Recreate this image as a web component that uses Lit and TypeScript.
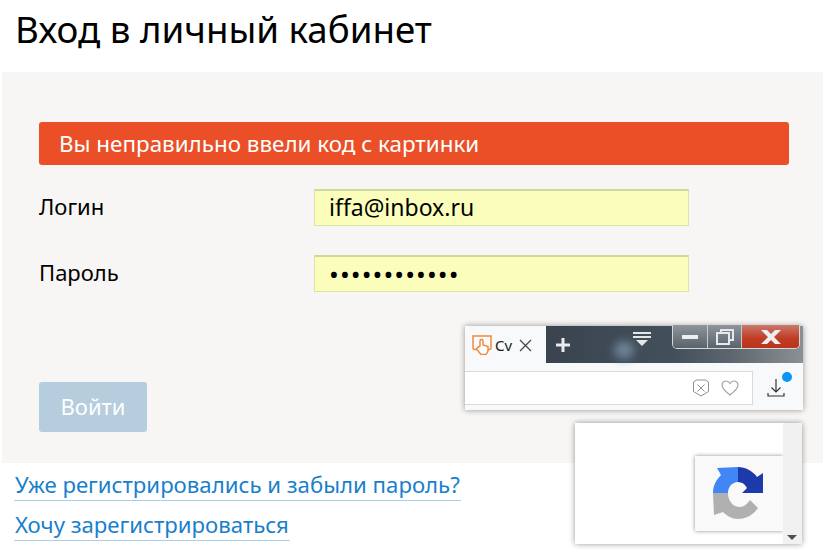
import {LitElement, html, css} from 'lit';
import {customElement} from 'lit/decorators.js';

@customElement('app-root')
export class AppRoot extends LitElement {
  static styles = css`
    :host {
      display: block;
      position: relative;
      width: 823px;
      height: 551px;
      overflow: hidden;
      background: #fff;
      font-family: 'Noto Sans', 'Open Sans', sans-serif;
      color: #000;
    }

    h1 {
      margin: 0;
      padding: 7px 0 0 15px;
      height: 72px;
      box-sizing: border-box;
      font-size: 36.7px;
      line-height: 44px;
      font-weight: 400;
    }

    .panel {
      margin-left: 2px;
      height: 391px;
      box-sizing: border-box;
      padding: 50px 34px 0 37px;
      background: #f7f6f4;
    }

    .alert {
      height: 43px;
      padding-left: 20px;
      border-radius: 3px;
      background: #eb4f28;
      color: #fff;
      font-size: 22.4px;
      line-height: 43px;
    }

    .row {
      display: grid;
      grid-template-columns: 275px 375px;
      align-items: center;
      font-size: 22px;
    }

    .row.first {
      margin-top: 24px;
    }

    .row.second {
      margin-top: 29px;
    }

    .row .label {
      padding-bottom: 3px;
    }

    .field {
      height: 37px;
      box-sizing: border-box;
      padding-left: 14px;
      border: 1px solid #dfe3a6;
      border-top: 2px solid #d3d79b;
      background: #fbfdbb;
      font-size: 23px;
      line-height: 33px;
    }

    .dots {
      font-size: 26px;
      line-height: 35px;
      letter-spacing: 1.1px;
    }

    .submit {
      display: block;
      width: 108px;
      height: 50px;
      margin-top: 90px;
      padding: 0 0 3px;
      border: none;
      border-radius: 3px;
      background: #b5cddd;
      color: #fff;
      font: inherit;
      font-size: 22px;
    }

    .links {
      display: flex;
      flex-direction: column;
      align-items: flex-start;
      gap: 8px;
      padding: 6px 0 0 14px;
    }

    .links a {
      display: block;
      height: 32px;
      padding: 0 1px;
      box-sizing: border-box;
      border-bottom: 1px solid #a9cfe9;
      color: #1a7fcb;
      font-size: 22.2px;
      line-height: 32px;
      text-decoration: none;
    }

    .browser {
      position: absolute;
      left: 465px;
      top: 326px;
      width: 338px;
      height: 84px;
      background: #f7f9fb;
      box-shadow: 0 0 6px rgba(0, 0, 0, 0.4);
    }

    .tabs {
      display: flex;
      height: 45px;
    }

    .tab {
      display: flex;
      align-items: center;
      width: 81px;
      height: 38px;
      padding-left: 7px;
      box-sizing: border-box;
      font-size: 15px;
    }

    .tab-title {
      width: 16px;
      margin-left: 3px;
      white-space: nowrap;
      color: #222;
    }

    .tab svg.close {
      margin-left: 7px;
    }

    .titlebar {
      position: relative;
      flex: 1;
      height: 37px;
      background: linear-gradient(90deg, #39444f 0%, #434f5b 50%, #5d666e 72%, #8b9095 100%);
    }

    .glow {
      position: absolute;
      left: 68px;
      top: 15px;
      width: 20px;
      height: 18px;
      border-radius: 50%;
      background: #6f8599;
      filter: blur(5px);
    }

    .plus {
      position: absolute;
      left: 10px;
      top: 12px;
    }

    .menu {
      position: absolute;
      left: 87px;
      top: 6px;
    }

    .winbtns {
      position: absolute;
      right: 3px;
      top: -1px;
      display: flex;
      width: 128px;
      height: 24px;
      box-sizing: border-box;
      border: 1px solid #d5d8da;
      border-top: none;
      border-radius: 0 0 5px 5px;
      overflow: hidden;
    }

    .winbtn {
      display: flex;
      align-items: center;
      justify-content: center;
      height: 100%;
      border-right: 1px solid #c5c9cc;
      background: linear-gradient(180deg, #8e959b 0%, #59636c 100%);
    }

    .winbtn.min {
      width: 34px;
    }

    .winbtn.max {
      width: 33px;
    }

    .winbtn.shut {
      flex: 1;
      border-right: none;
      background: linear-gradient(180deg, #c8796c 0%, #c23a22 60%, #b9351f 100%);
    }

    .toolbar {
      display: flex;
      align-items: flex-start;
      height: 39px;
    }

    .address {
      display: flex;
      align-items: center;
      justify-content: flex-end;
      gap: 12px;
      width: 288px;
      height: 34px;
      padding-right: 13px;
      box-sizing: border-box;
      border: 1px solid #d9d9d9;
      border-left: none;
      background: #fff;
    }

    .download {
      position: relative;
      margin: 7px 0 0 14px;
      height: 24px;
    }

    .badge {
      position: absolute;
      left: 15px;
      top: -6px;
      width: 10px;
      height: 10px;
      border-radius: 50%;
      background: #0a96f6;
    }

    .captcha {
      position: absolute;
      left: 575px;
      top: 423px;
      width: 227px;
      height: 121px;
      display: flex;
      background: #fff;
      box-shadow: 0 0 6px rgba(0, 0, 0, 0.4);
    }

    .captcha-body {
      position: relative;
      flex: 1;
    }

    .scroll {
      position: relative;
      width: 19px;
      background: #f1f1f1;
    }

    .arrow {
      position: absolute;
      left: 4px;
      bottom: 4px;
      width: 0;
      height: 0;
      border-left: 5px solid transparent;
      border-right: 5px solid transparent;
      border-top: 5px solid #505050;
    }

    .logo-box {
      position: absolute;
      left: 120px;
      top: 33px;
      width: 88px;
      height: 75px;
      background: #f9f9f9;
      box-shadow: 0 0 4px rgba(0, 0, 0, 0.45);
      clip-path: inset(-6px 0 -6px -6px);
    }

    .logo-box svg {
      display: block;
    }
  `;

  render() {
    return html`
      <h1>Вход в личный кабинет</h1>
      <div class="panel">
        <div class="alert">Вы неправильно ввели код с картинки</div>
        <div class="row first">
          <span class="label">Логин</span>
          <div class="field">iffa@inbox.ru</div>
        </div>
        <div class="row second">
          <span class="label">Пароль</span>
          <div class="field dots">••••••••••••</div>
        </div>
        <button class="submit">Войти</button>
      </div>
      <div class="links">
        <a href="#">Уже регистрировались и забыли пароль?</a>
        <a href="#">Хочу зарегистрироваться</a>
      </div>

      <div class="browser">
        <div class="tabs">
          <div class="tab">
            <svg width="20" height="20" viewBox="0 0 20 20" fill="none" stroke="#f08a3c" stroke-width="1.5">
              <path d="M5 14.500H3a2 2 0 0 1-2-2V1h18v11.500a2 2 0 0 1-2 2h-1" />
              <path d="M8 11V6a1.500 1.500 0 0 1 3 0v4l5 1.500V16l-2 3.500H9L4.500 14l1-1.500z" fill="#fff" />
            </svg>
            <span class="tab-title">Сv</span>
            <svg class="close" width="15" height="15" viewBox="0 0 15 15" stroke="#444" stroke-width="1.2">
              <path d="M2 2l11 11M13 2L2 13" />
            </svg>
          </div>
          <div class="titlebar">
            <div class="glow"></div>
            <svg class="plus" width="14" height="14" viewBox="0 0 14 14" fill="#e8eaec">
              <path d="M5.500 0h3v5.500H14v3H8.500V14h-3V8.500H0v-3h5.500z" />
            </svg>
            <svg class="menu" width="18" height="15" viewBox="0 0 18 15" fill="#e4e6e8">
              <path d="M0 0h18v2H0zM0 4h18v2H0zM3 8h12l-6 6z" />
            </svg>
            <div class="winbtns">
              <div class="winbtn min">
                <svg width="16" height="5" viewBox="0 0 16 5" fill="#eceeef"><rect width="16" height="4" y="1" /></svg>
              </div>
              <div class="winbtn max">
                <svg width="18" height="16" viewBox="0 0 18 16" fill="none" stroke="#e6e8ea" stroke-width="2">
                  <path d="M5 4V1h12v10h-3" />
                  <rect x="1" y="4" width="12" height="11" />
                </svg>
              </div>
              <div class="winbtn shut">
                <svg width="22" height="14" viewBox="0 0 22 14" fill="#eef0f0">
                  <path d="M1 0h6l4 4 4-4h6l-7 7 7 7h-6l-4-4-4 4H1l7-7z" />
                </svg>
              </div>
            </div>
          </div>
        </div>
        <div class="toolbar">
          <div class="address">
            <svg width="16" height="18" viewBox="0 0 16 18" fill="none" stroke="#8a8f94" stroke-width="1">
              <path d="M3.500 1h9l3 2v9.500L8 17l-7.500-4.500V3z" />
              <path d="M4.500 5.500l7 7M11.500 5.500l-7 7" />
            </svg>
            <svg width="18" height="16" viewBox="0 0 18 16" fill="none" stroke="#9a9ea2" stroke-width="1.1">
              <path d="M9 15C4 11 1 8.500 1 5.200 1 2.800 3 1 5 1c1.700 0 3 .9 4 2.500C10 1.900 11.300 1 13 1c2 0 4 1.800 4 4.200C17 8.500 14 11 9 15z" />
            </svg>
          </div>
          <div class="download">
            <svg width="18" height="24" viewBox="0 0 18 24" fill="none" stroke="#333" stroke-width="1.2">
              <path d="M9 1v13M4.500 9.500L9 14l4.500-4.500M1 15v3h16v-3" />
            </svg>
            <div class="badge"></div>
          </div>
        </div>
      </div>

      <div class="captcha">
        <div class="captcha-body">
          <div class="logo-box">
            <svg width="88" height="75" viewBox="0 0 88 75">
              <path d="M18 37C18 30 21 24 26 19L22 12L43 11V26C37 26 33 31 33 37z" fill="#4285f4" />
              <path d="M43 11C50 11 58 15 62 21L68 17V37H47L52 32C50 28 47 26 43 26z" fill="#1c3aa9" />
              <path d="M18 37H33C33 45 38 51 45 51C49 51 52 48 55 44L63 52C58 59 51 63 43 63C37 63 32 60 28 56L19 59z" fill="#b0b0b0" />
            </svg>
          </div>
        </div>
        <div class="scroll"><div class="arrow"></div></div>
      </div>
    `;
  }
}
